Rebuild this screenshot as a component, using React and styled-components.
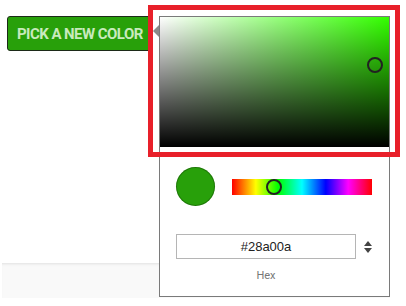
import React from 'react';
import styled, { createGlobalStyle } from 'styled-components';

const GlobalStyle = createGlobalStyle`
  html, body {
    margin: 0;
    padding: 0;
    background: #ffffff;
    font-family: 'Roboto', 'Liberation Sans', sans-serif;
  }
`;

// Page
const Page = styled.div`
  position: relative;
  width: 406px;
  height: 306px;
  overflow: hidden;
  display: flex;
  flex-direction: column;
`;

const Top = styled.div`
  height: 263px;
  padding: 16px 0 0 7px;
  box-sizing: border-box;
  position: relative;
`;

// Light card strip behind the popover
const Strip = styled.div`
  height: 35px;
  margin: 0 16px 0 2px;
  background: #f9f9f9;
  box-shadow: inset 0 3px 3px -2px rgba(0, 0, 0, 0.1);
`;

const PickButton = styled.button`
  height: 35px;
  padding: 0 9px;
  background: #28a00a;
  border: 1px solid #1c2a18;
  border-radius: 3px;
  color: #c8eabd;
  font-family: 'Roboto', sans-serif;
  font-weight: 700;
  font-size: 15px;
  letter-spacing: -0.55px;
  text-transform: uppercase;
  cursor: pointer;
`;

// Popover panel
const Popover = styled.div`
  position: absolute;
  left: 159px;
  top: 16px;
  width: 229px;
  height: 279px;
  border: 1px solid #7a7a7a;
  background: #ffffff;
  display: flex;
  flex-direction: column;

  &::before {
    content: '';
    position: absolute;
    left: -7px;
    top: 8px;
    border-style: solid;
    border-width: 6px 6px 6px 0;
    border-color: transparent #8a8a8a transparent transparent;
  }
`;

const Saturation = styled.div`
  position: relative;
  height: 130px;
  background:
    linear-gradient(to top, #000, rgba(0, 0, 0, 0)),
    linear-gradient(to right, #fff, rgba(255, 255, 255, 0)),
    hsl(${(p) => p.$hue}, 100%, 50%);
`;

const Cursor = styled.div`
  position: absolute;
  width: 16px;
  height: 16px;
  border: 2px solid #222;
  border-radius: 50%;
  box-sizing: border-box;
  transform: translate(-50%, -50%);
`;

const Body = styled.div`
  padding: 20px 16px 0 16px;
  display: flex;
  flex-direction: column;
`;

const SwatchRow = styled.div`
  display: flex;
  align-items: center;
  gap: 17px;
`;

const Swatch = styled.div`
  width: 39px;
  height: 39px;
  border-radius: 50%;
  background: ${(p) => p.$color};
  box-shadow: 0 0 0 1px rgba(0, 0, 0, 0.25) inset;
`;

const HueBar = styled.div`
  position: relative;
  width: 140px;
  height: 16px;
  background: linear-gradient(
    to right,
    #f00 0%,
    #ff0 17%,
    #0f0 33%,
    #0ff 50%,
    #00f 67%,
    #f0f 83%,
    #f00 100%
  );
`;

const HexRow = styled.div`
  display: flex;
  align-items: center;
  margin-top: 28px;
  gap: 8px;
`;

const HexInput = styled.div`
  flex: 0 0 auto;
  width: 178px;
  height: 23px;
  border: 1px solid #b5b5b5;
  display: flex;
  align-items: center;
  justify-content: center;
  font-family: 'Liberation Sans', Arial, sans-serif;
  font-size: 13px;
  color: #222;
`;

const Spinner = styled.div`
  flex: 0 0 auto;
  width: 8px;
  display: flex;
  flex-direction: column;
  align-items: center;
  gap: 2px;
`;

const Tri = styled.div`
  width: 0;
  height: 0;
  border-left: 4px solid transparent;
  border-right: 4px solid transparent;
  ${(p) => (p.$down ? 'border-top: 5px solid #444;' : 'border-bottom: 5px solid #444;')}
`;

const Label = styled.div`
  width: 180px;
  text-align: center;
  margin-top: 10px;
  font-size: 11px;
  color: #777;
`;

// Red highlight box over the saturation area
const Highlight = styled.div`
  position: absolute;
  left: 148px;
  top: 5px;
  width: 252px;
  height: 152px;
  border: 5px solid #e8202a;
  box-sizing: border-box;
  pointer-events: none;
`;

const App = () => {
  const hex = '#28a00a';
  const hue = 108;
  const sat = 0.9375;
  const val = 160 / 255;

  return (
    <Page>
      <GlobalStyle />
      <Top>
        <PickButton>Pick a new color</PickButton>
      </Top>
      <Strip />
      <Popover>
        <Saturation $hue={hue}>
          <Cursor style={{ left: `${sat * 100}%`, top: `${(1 - val) * 100}%` }} />
        </Saturation>
        <Body>
          <SwatchRow>
            <Swatch $color={hex} />
            <HueBar>
              <Cursor style={{ left: `${(hue / 360) * 100}%`, top: '50%' }} />
            </HueBar>
          </SwatchRow>
          <HexRow>
            <HexInput>{hex}</HexInput>
            <Spinner>
              <Tri />
              <Tri $down />
            </Spinner>
          </HexRow>
          <Label>Hex</Label>
        </Body>
      </Popover>
      <Highlight />
    </Page>
  );
};

export default App;
